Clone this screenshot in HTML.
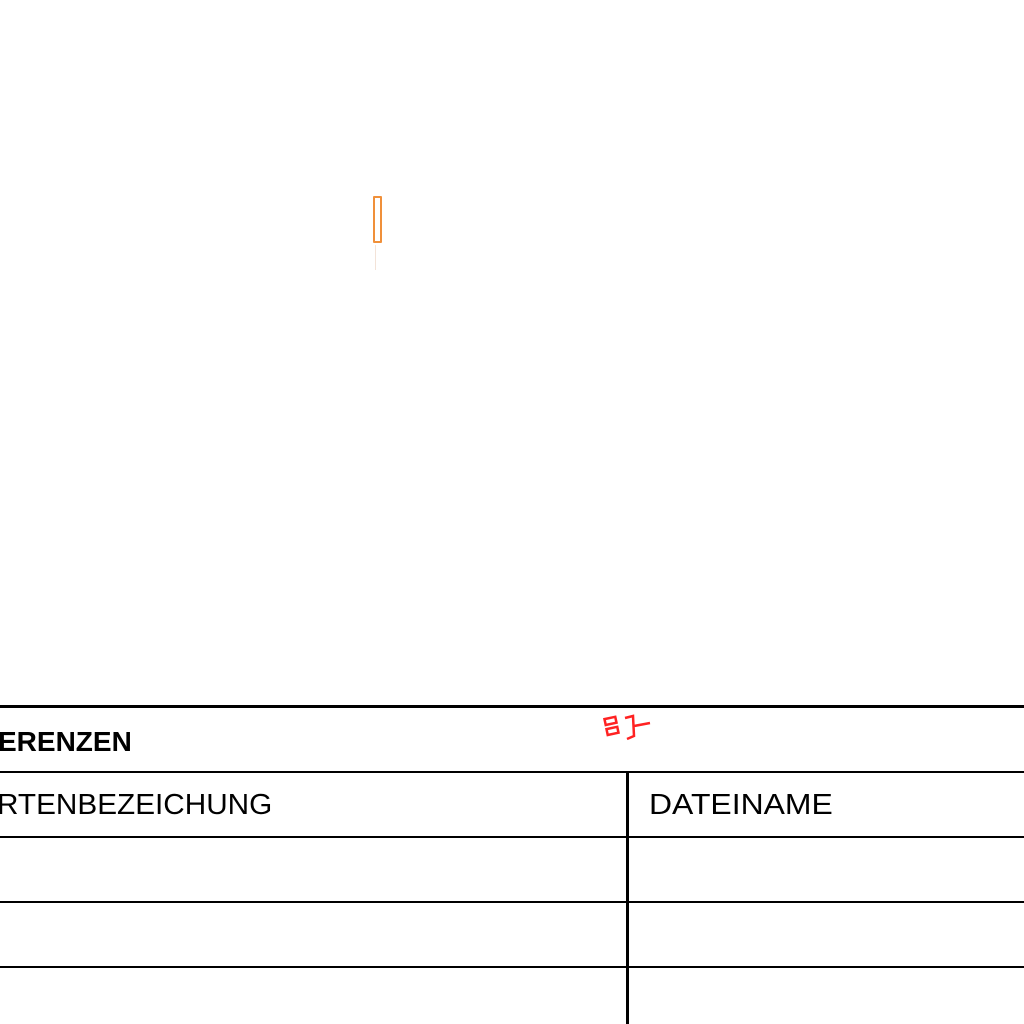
<!DOCTYPE html>
<html><head><style>
body{margin:0;width:1024px;height:1024px;background:#fff;position:relative;overflow:hidden;font-family:"Liberation Sans",sans-serif;}
.h{position:absolute;left:0;width:1024px;background:#000;}
.v{position:absolute;background:#000;width:3px;}
.t{position:absolute;font-size:28px;color:#000;white-space:nowrap;}
.s{font-size:29px;transform:scaleX(1.1);transform-origin:left center;}
</style></head><body>
<div style="position:absolute;left:373px;top:196px;height:47px;border:2px solid #f0903a;border-radius:1px;box-sizing:border-box;width:9px;"></div>
<div style="position:absolute;left:375px;top:245px;width:1px;height:25px;background:#f3e3d8;"></div>
<svg style="position:absolute;left:600px;top:708px" width="60" height="40" viewBox="0 0 60 40">
<g fill="none" stroke="#f22" stroke-width="2.5">
<rect x="5" y="10" width="11" height="6" transform="rotate(-12 10 13)"/>
<rect x="7" y="20" width="11" height="6" transform="rotate(-12 12 23)"/>
<path d="M25 10 L33 8 L34 28 L27 31 M34 18 L50 15"/>
</g></svg>
<div class="h" style="top:705px;height:3px"></div>
<div class="h" style="top:771px;height:2px"></div>
<div class="h" style="top:836px;height:2px"></div>
<div class="h" style="top:901px;height:2px"></div>
<div class="h" style="top:966px;height:2px"></div>
<div class="v" style="left:626px;top:772px;height:252px"></div>
<div class="t" style="left:-2px;top:726px;font-weight:bold">ERENZEN</div>
<div class="t s" style="left:-3px;top:789px;transform:scaleX(1.025)">RTENBEZEICHUNG</div>
<div class="t s" style="left:649px;top:789px">DATEINAME</div>
</body></html>
